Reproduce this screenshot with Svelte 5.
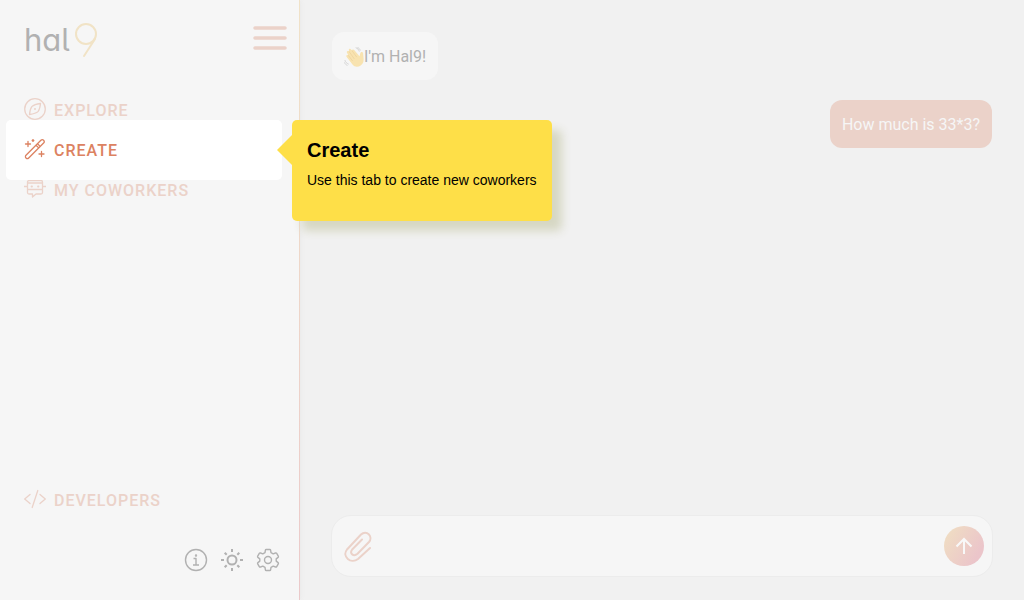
<script>
  let message = $state('');
</script>

<div class="app">
  <aside class="sidebar">
    <header>
      <a class="logo" href="#home" aria-label="hal9">
        <span>hal</span>
        <svg width="24" height="36" viewBox="0 0 24 36" fill="none" stroke="currentColor" stroke-width="2" stroke-linecap="round">
          <circle cx="12" cy="12" r="10" />
          <path d="M21 17 10 34" />
        </svg>
      </a>
      <button class="menu" aria-label="Menu">
        <svg width="34" height="24" viewBox="0 0 34 24" stroke="currentColor" stroke-width="3.500" stroke-linecap="round">
          <path d="M2 2h30M2 12h30M2 22h30" />
        </svg>
      </button>
    </header>

    <nav>
      <ul>
        <li>
          <a href="#explore">
            <svg class="icon" viewBox="0 0 22 22">
              <circle cx="11" cy="11" r="10.3" />
              <path d="M16.500 5.500C12.500 6 9.500 7 7.800 8.600 6.400 10.500 5.800 13.500 5.500 16.500c4-.5 7-1.500 8.700-3.100 1.400-1.900 2-4.900 2.300-7.900Z" />
              <circle cx="11" cy="11" r=".4" />
            </svg>
            <span>Explore</span>
          </a>
        </li>
        <li class="current">
          <a href="#create" aria-current="page">
            <svg class="icon" viewBox="0 0 22 22">
              <path d="M2 17.300 16.900 2.300a1.900 1.900 0 0 1 2.700 2.700L4.700 20a1.900 1.900 0 0 1-2.700-2.700ZM12 7.200l2.700 2.700M13.500 5.700l2.700 2.700" />
              <path d="M4 3.500v5M1.500 6h5M17.500 13.500v5M15 16h5" />
              <path d="M9 1.700 9.800 2.500 9 3.300 8.200 2.500Z" />
            </svg>
            <span>Create</span>
          </a>
          <div class="tip" role="dialog" aria-labelledby="tip-title">
            <h2 id="tip-title">Create</h2>
            <p>Use this tab to create new coworkers</p>
          </div>
        </li>
        <li>
          <a href="#coworkers">
            <svg class="icon" viewBox="0 0 22 22">
              <path d="M5 2.500h12a1.500 1.500 0 0 1 1.500 1.500v10.500a1.500 1.500 0 0 1-1.500 1.500h-5l-3.500 3v-3H5a1.500 1.500 0 0 1-1.500-1.500V4A1.500 1.500 0 0 1 5 2.500ZM3.500 5h15M3.500 11.500h15M0 8.500h3.500M18.500 8.500H22" />
              <path d="M7.500 8.500h.5M14 8.500h.5" stroke-width="1.800" />
            </svg>
            <span>My Coworkers</span>
          </a>
        </li>
      </ul>
    </nav>

    <footer>
      <a href="#developers">
        <svg class="icon" viewBox="0 0 22 22">
          <path d="M6 6.500.700 11 6 15.500M16 6.500l5.300 4.500-5.300 4.500M13.800 2.500l-5.600 17" />
        </svg>
        <span>Developers</span>
      </a>
      <div class="tools">
        <button aria-label="Information">
          <svg viewBox="0 0 24 24" stroke-width="1.400">
            <circle cx="12" cy="12" r="10.500" />
            <path d="M9.500 10.500H12V17M9 17h6" />
            <circle cx="12" cy="7.500" r=".5" />
          </svg>
        </button>
        <button aria-label="Theme">
          <svg viewBox="0 0 24 24" stroke-width="2">
            <circle cx="12" cy="12" r="4.500" />
            <path d="M12 1v3M12 20v3M1 12h3M20 12h3M4.700 4.700l2 2M17.300 17.300l2 2M4.700 19.300l2-2M17.300 6.700l2-2" />
          </svg>
        </button>
        <button aria-label="Settings">
          <svg viewBox="0 0 24 24" stroke-width="1.400">
            <path d="M10.200 1.500h3.600q.7 0 .8.700l.4 2.500 2.200 1.200 2.300-.9q.8-.3 1.200.4l1.600 2.800q.4.700-.2 1.200l-1.900 1.500v2.200l1.900 1.500q.6.500.2 1.200l-1.600 2.800q-.4.700-1.200.4l-2.300-.9-2.200 1.200-.4 2.500q-.1.700-.8.700h-3.600q-.7 0-.8-.7L9 19.300l-2.200-1.200-2.300.9q-.8.300-1.200-.4l-1.600-2.800q-.4-.7.200-1.200l1.900-1.500v-2.200L1.900 9.400q-.6-.5-.2-1.200l1.600-2.800q.4-.7 1.200-.4l2.300.9L9 4.700l.4-2.500q.1-.7.8-.7Z" />
            <circle cx="12" cy="12" r="3.500" />
          </svg>
        </button>
      </div>
    </footer>
  </aside>

  <main>
    <div class="chat">
      <p class="bubble bot">
        <svg width="20" height="20" viewBox="0 0 20 20" role="img" aria-label="Waving hand">
          <path d="M8.500 17.500 2.500 9.800c-.8-1.500 1-2.500 1.900-1.300L3 5.800c-.8-1.500 1.200-2.600 2.100-1.200L4.900 3.500c-.5-1.500 1.400-2.300 2.200-.9L8 3.700c0-1.400 1.500-1.800 2.200-.6l5.300 6.200c.6-1.400.3-2.800 1.200-3.900.8-.9 2.500-.3 2.500 1.100-.2 2.500 1 5.300.1 8.400-1.500 4.600-7.700 6.600-10.800 2.600Z" fill="#f8e3b0" />
          <path d="m4.400 8.500 4 5.200M5.100 4.600l5 7M8 3.700l4.500 6.100" fill="none" stroke="#ecd09b" stroke-width=".7" stroke-linecap="round" />
          <path d="M12 .8c1.700.6 2.700 1.700 3.200 3.400M13.800.500c1.200.6 2 1.400 2.400 2.600M1 13.500c.5 1.700 1.600 2.900 3.300 3.500M.6 15.800c.5 1.200 1.300 2 2.500 2.500" fill="none" stroke="#cfcfcf" stroke-width=".9" stroke-linecap="round" />
        </svg>I'm Hal9!
      </p>
      <p class="bubble user">How much is 33*3?</p>
    </div>

    <form class="composer" onsubmit={(event) => event.preventDefault()}>
      <button class="attach" type="button" aria-label="Attach a file">
        <svg width="28" height="32" viewBox="0 0 28 32" fill="none" stroke="currentColor" stroke-width="2" stroke-linecap="round" stroke-linejoin="round">
          <path d="M26 18 14 29C7 34.500-2.500 26.500 3 19.500L17 4.500C22.500-.5 29.500 6.500 25 12L13.500 23.800C9.500 27 5.200 23.500 8.200 19.500L18 9.500" />
        </svg>
      </button>
      <input type="text" aria-label="Message" bind:value={message} />
      <button class="send" aria-label="Send">
        <svg width="18" height="18" viewBox="0 0 18 18" fill="none" stroke="currentColor" stroke-width="2">
          <path d="M9 17V2M1.500 9.500 9 2l7.500 7.500" />
        </svg>
      </button>
    </form>
  </main>
</div>

<style>
  :global(body) {
    margin: 0;
  }

  .app {
    --pale: #ebd2c9;
    display: flex;
    min-height: 100vh;
    background: #f1f1f1;
    color: #b1b1b1;
    font: 16px/24px Roboto, sans-serif;
  }

  .app :is(h2, p, ul) {
    margin: 0;
    padding: 0;
    list-style: none;
  }

  button {
    display: flex;
    align-items: center;
    justify-content: center;
    border: 0;
    padding: 0;
    background: none;
    color: inherit;
    cursor: pointer;
  }

  .sidebar {
    box-sizing: border-box;
    display: flex;
    flex: 0 0 300px;
    flex-direction: column;
    border-right: 1px solid;
    border-image: linear-gradient(#f0e2c8, #ebc9ca) 1;
    background: #f6f6f6;
    box-shadow: 1px 0 4px #eaeaea;
  }

  header {
    display: flex;
    align-items: center;
    justify-content: space-between;
    height: 60px;
    padding: 10px 12px 20px 24px;
  }

  .logo {
    display: flex;
    align-items: center;
    gap: 4px;
    color: #b1b1b1;
    text-decoration: none;
  }

  .logo span {
    font: 400 31px/36px Inter, sans-serif;
    font-feature-settings: "cv11", "cv05";
  }

  .logo svg {
    color: #f1e3c6;
  }

  .menu {
    color: var(--pale);
    padding-bottom: 4px;
  }

  nav a,
  footer a {
    position: relative;
    display: flex;
    align-items: center;
    gap: 8px;
    height: 40px;
    padding-left: 24px;
    color: var(--pale);
    font-weight: 500;
    letter-spacing: 1px;
    text-decoration: none;
    text-transform: uppercase;
  }

  nav a span,
  footer a span {
    padding-top: 2px;
  }

  .icon {
    width: 22px;
    height: 22px;
    margin-bottom: 2px;
    fill: none;
    stroke: currentColor;
    stroke-width: 1.3;
    stroke-linecap: round;
    stroke-linejoin: round;
  }

  .current {
    position: relative;
    z-index: 1;
  }

  .current::before {
    content: "";
    position: absolute;
    inset: -10px 17px -10px 6px;
    border-radius: 5px;
    background: #fff;
  }

  .current a {
    color: #dc8261;
  }

  .tip {
    position: absolute;
    top: -10px;
    left: 292px;
    box-sizing: border-box;
    min-height: 101px;
    padding: 15px;
    border-radius: 5px;
    background: #fedf48;
    box-shadow: 10px 10px 10px #d6d7c3;
    color: #000;
    font: 14px/20px "Liberation Sans", sans-serif;
    white-space: nowrap;
  }

  .tip::before {
    content: "";
    position: absolute;
    top: 15px;
    right: 100%;
    border: solid transparent;
    border-width: 15px 15px 15px 0;
    border-right-color: #fedf48;
  }

  .tip h2 {
    padding-bottom: 5px;
    font-size: 20px;
    line-height: 30px;
  }

  footer {
    margin-top: auto;
    padding-bottom: 28px;
  }

  .tools {
    display: flex;
    justify-content: flex-end;
    gap: 12px;
    padding: 28px 19px 0;
  }

  .tools svg {
    width: 24px;
    height: 24px;
    fill: none;
    stroke: currentColor;
    stroke-linejoin: round;
  }

  main {
    display: flex;
    flex: 1;
    flex-direction: column;
    min-width: 0;
    padding: 32px 31px 23px;
  }

  .chat {
    display: flex;
    flex: 1;
    flex-direction: column;
    align-items: flex-start;
    gap: 20px;
    padding: 0 1px;
  }

  .app .bubble {
    display: flex;
    align-items: center;
    padding: 13px 12px 11px;
    border-radius: 12px;
    background: #f6f6f6;
  }

  .app .user {
    align-self: flex-end;
    background: var(--pale);
    color: #f6f6f6;
  }

  .composer {
    display: flex;
    align-items: center;
    gap: 12px;
    height: 60px;
    padding: 0 8px 0 12px;
    border: 1px solid #ececec;
    border-radius: 20px;
    background: #f6f6f6;
  }

  .composer input {
    flex: 1;
    min-width: 0;
    height: 40px;
    border: 0;
    padding: 0;
    outline: 0;
    background: none;
    color: inherit;
    font: inherit;
  }

  .attach {
    color: var(--pale);
  }

  .send {
    width: 40px;
    height: 40px;
    border-radius: 50%;
    background: linear-gradient(120deg, #f0e0c2, #ebc5ca 80%);
    color: #f8f8f8;
  }
</style>
